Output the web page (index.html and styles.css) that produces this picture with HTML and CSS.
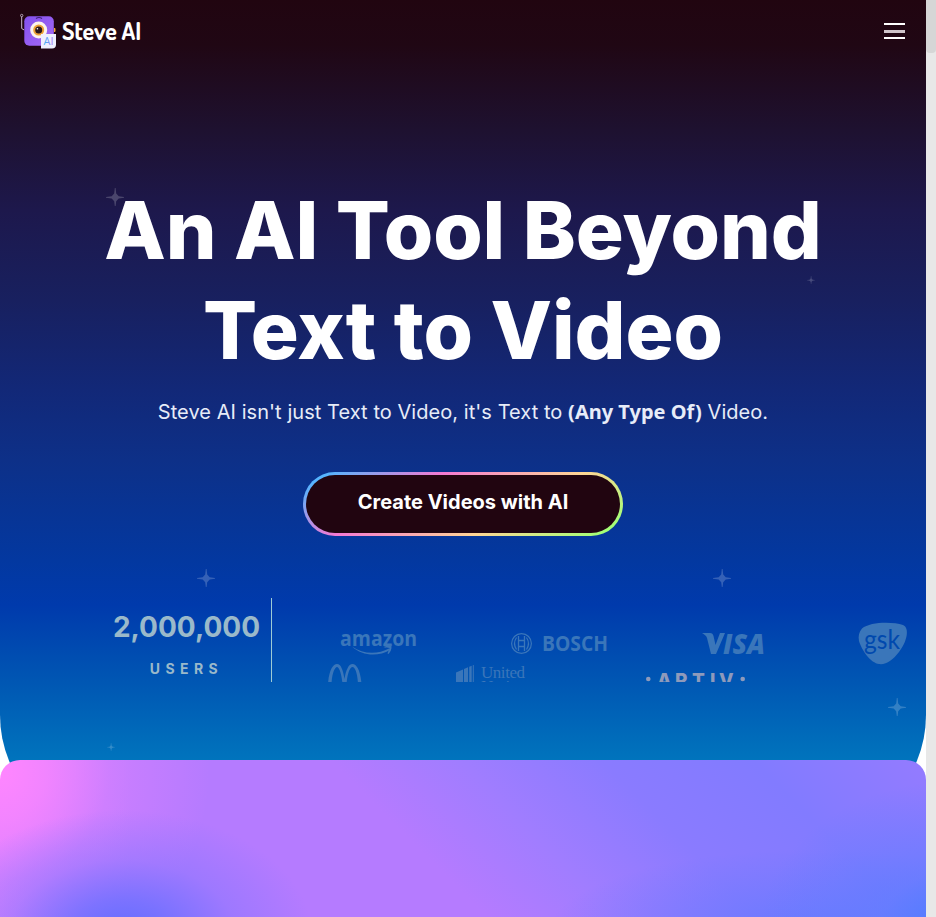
FILE: index.html
```html
<!DOCTYPE html>
<html lang="en">
<head>
<meta charset="utf-8">
<title>Steve AI</title>
<link rel="stylesheet" href="styles.css">
</head>
<body>
<svg width="0" height="0" class="defs"><symbol id="star" viewBox="0 0 18 18"><path d="M8.800 0H9.600L10.200 5.500 12.700 8.200 18 9V9.800L12.700 10.600 10.200 13.200 9.600 18H8.800L8.200 13.200 5.700 10.600 0 9.800V9L5.700 8.200 8.200 5.500Z" fill="currentColor"/></symbol></svg>
<div class="page">
  <section class="hero">
    <header class="nav">
      <a class="brand">
        <svg class="robot" width="38" height="38" viewBox="0 0 38 38">
          <defs><linearGradient id="body" x1="0" y1="0" x2="1" y2="1"><stop offset="0" stop-color="#8250ee"/><stop offset="1" stop-color="#a66af5"/></linearGradient>
          <linearGradient id="tag" x1="0" x2="1"><stop offset="0" stop-color="#3bb8f5"/><stop offset="1" stop-color="#a873f5"/></linearGradient></defs>
          <path d="M1.700 4v12.500l2.500 1.500" fill="none" stroke="#cbb9cf" stroke-width="1"/><circle cx="1.700" cy="3.500" r="1.200" fill="#220812" stroke="#cbb9cf" stroke-width=".8"/>
          <rect x="4.300" y="4.300" width="29.500" height="29.500" rx="5" fill="url(#body)"/>
          <path d="M16 6.500q3-2 6 0" fill="none" stroke="#3d2374" stroke-width="1.200"/>
          <path d="M34 16h1.200q.8 2 0 4H34z" fill="#f4a632"/>
          <circle cx="18.700" cy="18" r="8.500" fill="#fbf4ec"/><circle cx="18.700" cy="18" r="5.500" fill="#eda136"/><circle cx="18.700" cy="18" r="3.500" fill="#29181c"/><circle cx="17.400" cy="16.800" r=".8" fill="#fff"/>
          <path d="M21 22h15v10.500q0 4-4 4H21z" fill="#eef0ff"/>
          <text x="23.500" y="33" class="tag-text" fill="url(#tag)">AI</text>
        </svg>
        <span class="brand-name">Steve AI</span>
      </a>
      <div class="burger"><i></i><i></i><i></i></div>
    </header>
    <div class="intro">
      <h1>An AI Tool Beyond<br>Text to Video</h1>
      <p>Steve AI isn't just Text to Video, it's Text to <strong>(Any Type Of)</strong> Video.</p>
      <a class="cta"><span>Create Videos with AI</span></a>
    </div>
    <div class="proof">
      <div class="users"><b>2,000,000</b><span>USERS</span></div>
      <svg class="logos" width="655" height="84" viewBox="271 598 655 84">
        <g fill="currentColor">
          <text x="340" y="646" class="amazon" textLength="77" lengthAdjust="spacingAndGlyphs">amazon</text>
          <path d="M352 646.500c11 8 26 8 37 2l1 1.500c-12 7-28 6-38-3.500z"/><path d="M383.500 647c3-1.500 6-1.500 8-1 .3 3-1 6-3 8l-1-.5 2-5.500c-2-.4-4-.2-6-1z"/>
          <g fill="none" stroke="currentColor"><circle cx="521.500" cy="643.500" r="9.900" stroke-width="1.200"/><path d="M518.500 636v15M524.500 636v15M518.500 640.500h6M518.500 646.500h6" stroke-width="1.300"/><path d="M516.500 637.500q-4 6 0 12M526.500 637.500q4 6 0 12" stroke-width="1.200"/></g>
          <text x="542" y="651" class="bosch" textLength="66" lengthAdjust="spacingAndGlyphs">BOSCH</text>
          <path d="M702 633h8c2 0 3 1 3.500 3l2 9 4.500-12h5l-9 21h-5l-4-16c-.3-2-3-4-5-5z"/>
          <text x="723" y="654" class="visa" textLength="42" lengthAdjust="spacingAndGlyphs">ISA</text>
          <path d="M862 628.500c8-7 31-7 41-3.500 7 3 4 17-4 27-6 8-13 13-20 12-8-1-17-13-20-23-1-5 0-9 3-12.500z"/>
          <text x="864" y="648.500" class="gsk" textLength="36" lengthAdjust="spacingAndGlyphs">gsk</text>
          <path d="M328 684c1-14 5-20 9-20s6 6 7.500 15c1.500-9 4-15 8-15s8 6 9 20h-3.500c-.5-11-3-17-5.500-17s-5 6-6 17h-4c-1-11-3.500-17-5.500-17s-5 6-5.500 17z"/>
          <path d="M456 672.500l7-3v13.500h-7zM464 669l4-1.700V683h-4zM469.200 666.800l2.500-1V683h-2.500zM472.800 665.300l1-.4V683h-1z"/>
          <text x="481" y="678" class="united" textLength="44">United</text><text x="481" y="692" class="united">Nations</text>
        </g>
        <g class="aptiv"><circle cx="648.300" cy="679" r="2.300"/><text y="687" x="657 675 692 710 719">APTIV</text><circle cx="742.700" cy="679" r="2.300"/></g>
      </svg>
    </div>
    <svg class="star s1"><use href="#star"/></svg><svg class="star small s2"><use href="#star"/></svg><svg class="star s3"><use href="#star"/></svg><svg class="star s4"><use href="#star"/></svg><svg class="star s5"><use href="#star"/></svg><svg class="star small s6"><use href="#star"/></svg>
  </section>
  <section class="showcase"></section>
</div>
<div class="scroll"><div class="thumb"></div></div>
</body>
</html>
```

FILE: styles.css
```css
* { box-sizing: border-box; }
body { margin: 0; height: 917px; overflow: hidden; display: flex; background: #fff; font-family: Inter, "Liberation Sans", sans-serif; color: #fff; }
.defs { position: absolute; }
.page { width: 926px; height: 917px; overflow: hidden; }
.hero { position: relative; height: 835px; margin-bottom: -75px; border-radius: 0 0 120px 120px; background: linear-gradient(#210510 0, #200714 45px, #1e1130 130px, #1d184c 210px, #18205f 300px, #122878 390px, #0d3088 460px, #0338a0 560px, #003aac 605px, #0056b3 680px, #0074bd 760px, #008bc4 835px); }
.nav { display: flex; justify-content: space-between; height: 62px; padding: 12px 21px 0 20px; }
.brand { display: flex; }
.tag-text { font: 11px "Open Sans", sans-serif; }
.brand-name { font: 700 24px/38px Dosis, Lato, sans-serif; margin-left: 4px; letter-spacing: -.1px; }
.burger { width: 21px; margin-top: 11px; display: flex; flex-direction: column; gap: 5px; }
.burger i { height: 2px; background: #fff; }
.burger i:nth-child(2) { height: 3px; margin-bottom: -1px; background: #cfc4ca; }
.intro { display: flex; flex-direction: column; align-items: center; padding-top: 118px; text-align: center; }
h1 { margin: 0; font-size: 80px; line-height: 100px; font-weight: 800; letter-spacing: -.05px; white-space: nowrap; }
p { margin: 17px 0 0; font-size: 20px; line-height: 30px; color: #e7ecf8; white-space: nowrap; letter-spacing: .055px; }
strong { font-family: "Noto Sans", sans-serif; font-weight: 700; letter-spacing: 0; }
.cta { display: block; width: 320px; height: 64px; margin-top: 45px; padding: 3px; border-radius: 32px; background: linear-gradient(150deg, #54b5ff 6%, #f47ad2 33%, #ffd695 65%, #a4ff76 94%); }
.cta span { display: block; height: 58px; border-radius: 29px; background: #210510; font-size: 20px; line-height: 54px; font-weight: 700; }
.proof { display: flex; height: 84px; margin-top: 62px; }
.users { width: 272px; padding-left: 102px; border-right: 1px solid #9dcbd5; display: flex; flex-direction: column; align-items: center; color: #9ab9ca; }
.users b { font-size: 28px; line-height: 34px; margin-top: 12px; font-weight: 700; }
.users span { font-size: 14px; line-height: 18px; margin-top: 16px; font-weight: 700; letter-spacing: 5.4px; }
.logos { display: block; margin-left: -1px; color: #3a76ba; overflow: hidden; }
.amazon { font: 700 22px "Open Sans", sans-serif; }
.bosch { font: 700 21px "Open Sans", sans-serif; }
.visa { font: italic 800 29px "Open Sans", sans-serif; }
.gsk { font: 26px Lato, sans-serif; fill: #0049ae; }
.united { font: 17px "Liberation Serif", serif; }
.aptiv { font: 800 19px Inter, sans-serif; fill: #8e9abb; }
.star { position: absolute; width: 18px; height: 18px; color: #fff; opacity: .2; }
.star.small { width: 8px; height: 8px; }
.s1 { left: 106px; top: 188px; } .s2 { left: 807px; top: 276px; }
.s3 { left: 197px; top: 569px; } .s4 { left: 713px; top: 569px; }
.s5 { left: 888px; top: 698px; } .s6 { left: 107px; top: 743px; }
.showcase { position: relative; height: 157px; border-radius: 20px 20px 0 0; background:
  radial-gradient(ellipse 190px 125px at 122px 175px, #626dff 0, #6d70ffd0 28%, #8075ff70 60%, #8c76ff00 100%),
  radial-gradient(ellipse 210px 210px at 0 12px, #ff86ff 0, #ff86ffc0 22%, #f084ff60 52%, #d080ff00 100%),
  linear-gradient(90deg, #d080ff 0, #d080ff00 14%),
  radial-gradient(ellipse 200px 150px at 960px 170px, #4a7cff 0, #5f7dffa0 40%, #727cff00 100%),
  radial-gradient(ellipse 260px 80px at 810px 170px, #6a7aff 0, #7279ff00 100%),
  linear-gradient(45deg, #b57bff 0, #b57bff 45%, #a07dff 57%, #8a7bff 70%, #827bff 84%, #947bff 100%); }
.scroll { width: 10px; height: 917px; background: #e8e8e8; }
.thumb { height: 53px; background: #d6d6d6; border-radius: 0 0 4px 4px; }
```
